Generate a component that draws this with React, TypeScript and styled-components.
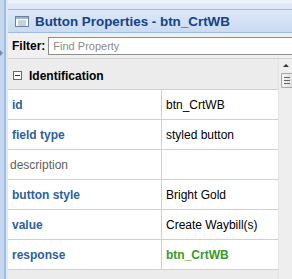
import React from "react";
import styled, { createGlobalStyle } from "styled-components";

const Global = createGlobalStyle`
  html, body { margin: 0; padding: 0; }
  body { width: 292px; height: 279px; overflow: hidden; font-family: "Liberation Sans", Arial, sans-serif; background: #ececec; }
`;

const Root = styled.div`
  display: flex;
  width: 292px;
  height: 279px;
  overflow: hidden;
`;

const SideStrip = styled.div`
  width: 4px;
  flex: none;
  background: #c6d8f0;
  border-right: 2px solid #9ebde6;
  position: relative;
`;

const SideArrow = styled.div`
  position: absolute;
  left: 0;
  top: 50px;
  width: 0;
  height: 0;
  border-top: 3px solid transparent;
  border-bottom: 3px solid transparent;
  border-left: 3px solid #7a8aa0;
`;

const Main = styled.div`
  flex: 1;
  display: flex;
  flex-direction: column;
  min-width: 0;
  border-left: 2px solid #dfe8f6;
`;

const TopStrip = styled.div`
  flex: none;
  background: #dfe8f6;
  border-top: 3px solid #eef3fa;
  border-bottom: 1px solid #99bbe8;
  box-sizing: border-box;
  height: 10px;
`;

const Header = styled.div`
  height: 23px;
  flex: none;
  box-sizing: border-box;
  display: flex;
  align-items: center;
  gap: 6px;
  padding-left: 7px;
  background: linear-gradient(#dce8f7, #c9dbf2);
  border-bottom: 1px solid #99bbe8;
`;

const Title = styled.span`
  font-weight: bold;
  font-size: 13.4px;
  color: #15428b;
  white-space: nowrap;
`;

const FilterBar = styled.div`
  height: 26px;
  flex: none;
  box-sizing: border-box;
  display: flex;
  align-items: center;
  padding-left: 4px;
  gap: 3px;
  background: #f0f0f0;
  border-bottom: 1px solid #d0d0d0;
`;

const FilterLabel = styled.span`
  font-weight: bold;
  font-size: 12px;
  color: #000;
`;

const FilterInput = styled.input`
  flex: 1;
  height: 18px;
  box-sizing: border-box;
  border: 1px solid #8c8c8c;
  border-right: none;
  padding: 0 4px;
  font-family: "Liberation Sans", Arial, sans-serif;
  font-size: 11px;
  background: #fff;
  outline: none;
  &::placeholder { color: #8a8a8a; }
`;

const Body = styled.div`
  flex: 1;
  display: flex;
  min-height: 0;
  background: #ececec;
`;

const GridArea = styled.div`
  flex: 1;
  padding-top: 3px;
  min-width: 0;
`;

const GroupRow = styled.div`
  height: 27px;
  display: flex;
  align-items: center;
  gap: 7px;
  padding-left: 5px;
  font-weight: bold;
  font-size: 12px;
  color: #000;
`;

const Table = styled.div`
  display: grid;
  grid-template-columns: 154px 116px;
  background: #fff;
  border-top: 1px solid #d0d0d0;
  width: 271px;
  box-sizing: border-box;
  border-right: 1px solid #c8c8c8;
`;

const Cell = styled.div<{ $kind?: "name" | "plain" | "value" | "link" }>`
  height: 30px;
  box-sizing: border-box;
  display: flex;
  align-items: center;
  padding-left: 4px;
  border-bottom: 1px solid #d0d0d0;
  font-size: 12px;
  white-space: nowrap;
  ${(p) => (p.$kind === "name" || p.$kind === "plain") && "border-right: 1px solid #d0d0d0;"}
  ${(p) =>
    p.$kind === "name"
      ? "font-weight: bold; color: #2e5f9e;"
      : p.$kind === "plain"
      ? "color: #606060; padding-left: 2px;"
      : p.$kind === "link"
      ? "font-weight: bold; color: #3a9a2a;"
      : "color: #000;"}
`;

const ScrollBar = styled.div`
  width: 13px;
  flex: none;
  background: #eeeeee;
  border-left: 1px solid #e4e4e4;
  display: flex;
  flex-direction: column;
  align-items: center;
  padding-top: 5px;
  gap: 6px;
`;

const UpArrow = styled.div`
  width: 0;
  height: 0;
  border-left: 3px solid transparent;
  border-right: 3px solid transparent;
  border-bottom: 3px solid #333;
`;

const Thumb = styled.div`
  width: 11px;
  height: 15px;
  margin-left: 2px;
  box-sizing: border-box;
  border: 1px solid #a8a8a8;
  border-right: none;
  border-radius: 2px 0 0 2px;
  background: linear-gradient(90deg, #f4f4f4, #e0e0e0);
  display: flex;
  flex-direction: column;
  justify-content: center;
  gap: 2px;
  padding-left: 2px;
`;

const Grip = styled.div`
  width: 6px;
  height: 1px;
  background: #666;
`;

const PanelIcon = () => (
  <svg width="14" height="11" viewBox="0 0 14 11">
    <rect x="0.5" y="0.5" width="13" height="10" fill="#fff" stroke="#6d7f9a" />
    <rect x="1" y="1" width="12" height="2" fill="#9fb3cf" />
    <line x1="3" y1="5" x2="11" y2="5" stroke="#8ea2bd" />
    <line x1="3" y1="7" x2="11" y2="7" stroke="#8ea2bd" />
    <line x1="3" y1="9" x2="11" y2="9" stroke="#8ea2bd" />
  </svg>
);

const MinusIcon = () => (
  <svg width="9" height="9" viewBox="0 0 9 9">
    <rect x="0.5" y="0.5" width="8" height="8" fill="#fff" stroke="#5a6a80" />
    <line x1="2" y1="4.5" x2="7" y2="4.5" stroke="#333" />
  </svg>
);

const rows: { name: string; value: string; nameKind: "name" | "plain"; valueKind: "value" | "link" }[] = [
  { name: "id", value: "btn_CrtWB", nameKind: "name", valueKind: "value" },
  { name: "field type", value: "styled button", nameKind: "name", valueKind: "value" },
  { name: "description", value: "", nameKind: "plain", valueKind: "value" },
  { name: "button style", value: "Bright Gold", nameKind: "name", valueKind: "value" },
  { name: "value", value: "Create Waybill(s)", nameKind: "name", valueKind: "value" },
  { name: "response", value: "btn_CrtWB", nameKind: "name", valueKind: "link" },
];

export default function App() {
  return (
    <Root>
      <Global />
      <SideStrip>
        <SideArrow />
      </SideStrip>
      <Main>
        <TopStrip />
        <Header>
          <PanelIcon />
          <Title>Button Properties - btn_CrtWB</Title>
        </Header>
        <FilterBar>
          <FilterLabel>Filter:</FilterLabel>
          <FilterInput placeholder="Find Property" />
        </FilterBar>
        <Body>
          <GridArea>
            <GroupRow>
              <MinusIcon />
              Identification
            </GroupRow>
            <Table>
              {rows.map((r) => (
                <React.Fragment key={r.name}>
                  <Cell $kind={r.nameKind}>{r.name}</Cell>
                  <Cell $kind={r.valueKind}>{r.value}</Cell>
                </React.Fragment>
              ))}
            </Table>
          </GridArea>
          <ScrollBar>
            <UpArrow />
            <Thumb>
              <Grip />
              <Grip />
              <Grip />
            </Thumb>
          </ScrollBar>
        </Body>
      </Main>
    </Root>
  );
}
